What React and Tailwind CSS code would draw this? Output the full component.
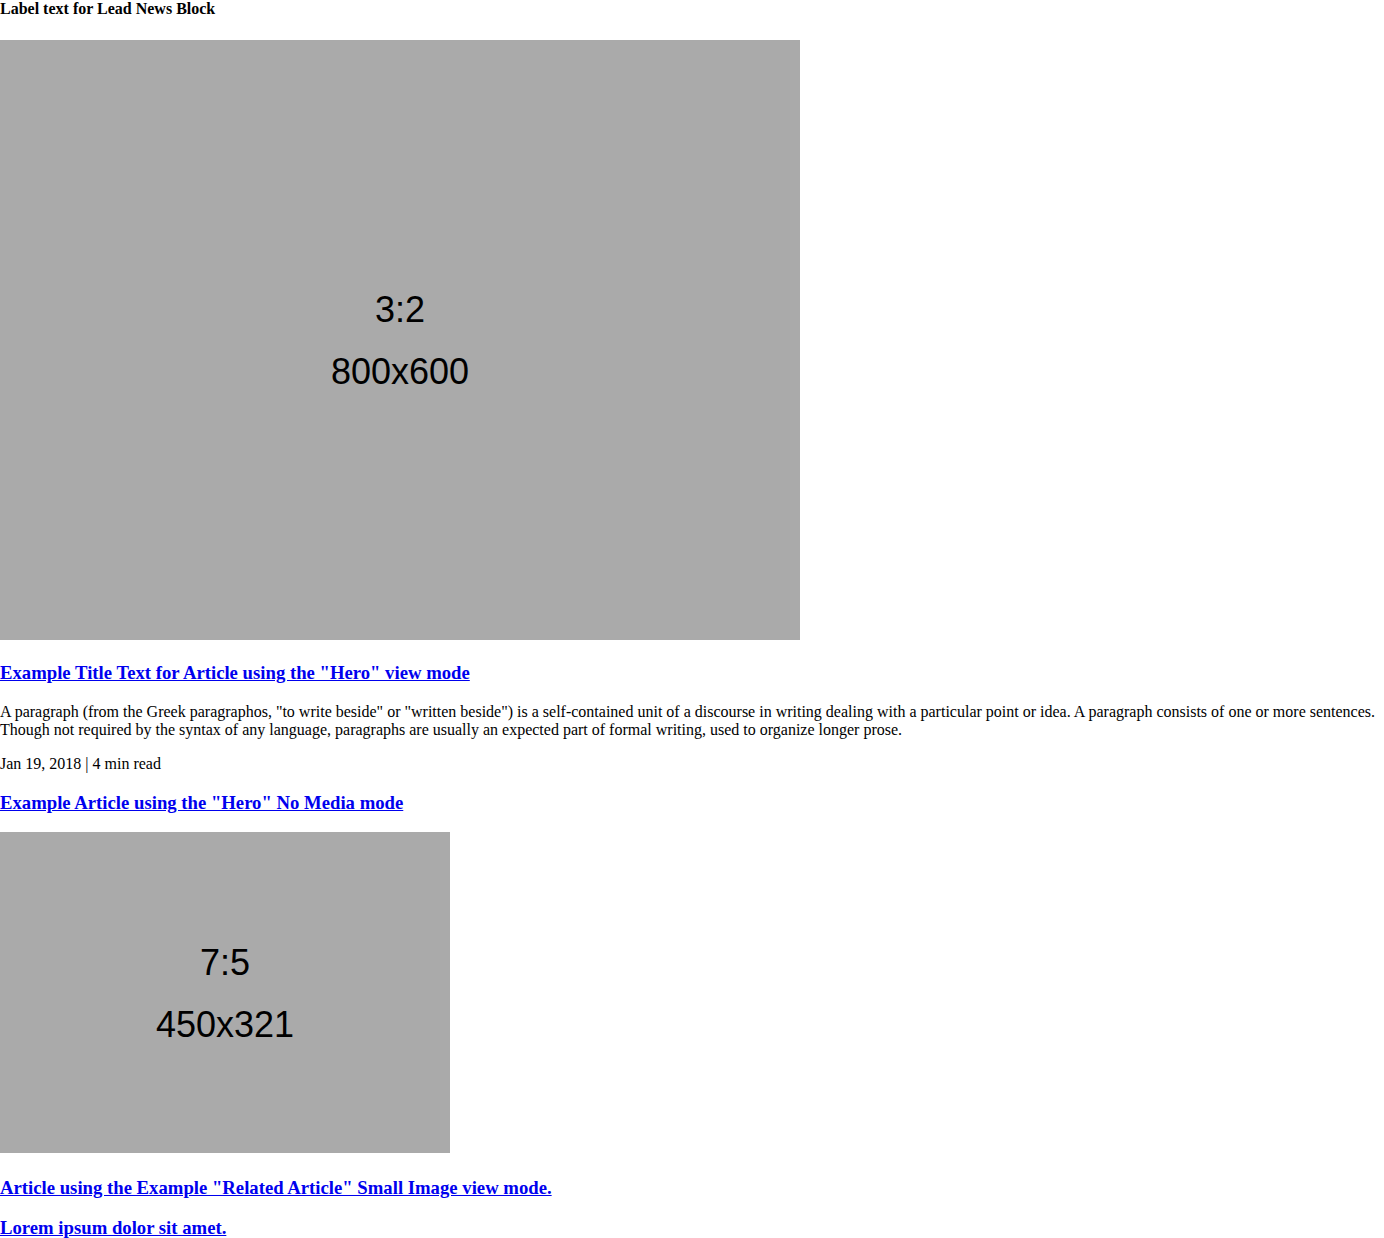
const Placeholder = ({ ratio, size, w, h }) => (
  <div
    className="flex flex-col items-center justify-center bg-[#aaaaaa] text-black font-['Liberation_Sans',Arial,sans-serif] text-[36px] leading-[62px]"
    style={{ width: w, height: h }}
  >
    <span className="translate-y-[1px]">{ratio}</span>
    <span className="translate-y-[1px]">{size}</span>
  </div>
);

const TitleLink = ({ children, className = '' }) => (
  <h3 className={`text-[18.72px] font-bold leading-[21.5px] ${className}`}>
    <a href="#" className="text-[#0000ee] underline">
      {children}
    </a>
  </h3>
);

export default function App() {
  return (
    <div className="bg-white text-black font-['Liberation_Serif','Times_New_Roman',serif] text-[16px] leading-[18.4px] min-h-screen">
      <div className="font-bold">Label text for Lead News Block</div>

      <div className="mt-[21.6px]">
        <Placeholder ratio="3:2" size="800x600" w={800} h={600} />
      </div>

      <TitleLink className="mt-[21.7px]">
        Example Title Text for Article using the "Hero" view mode
      </TitleLink>

      <p className="mt-[19.7px]">
        A paragraph (from the Greek paragraphos, "to write beside" or "written beside") is a self-contained unit of a discourse in writing dealing with a particular point or idea. A paragraph consists of one or more sentences. Though not required by the syntax of any language, paragraphs are usually an expected part of formal writing, used to organize longer prose.
      </p>

      <p className="mt-[15px]">Jan 19, 2018 | 4 min read</p>

      <TitleLink className="mt-[18.7px]">
        Example Article using the "Hero" No Media mode
      </TitleLink>

      <div className="mt-[19px]">
        <Placeholder ratio="7:5" size="450x321" w={450} h={321} />
      </div>

      <TitleLink className="mt-[23.7px]">
        Article using the Example "Related Article" Small Image view mode.
      </TitleLink>

      <TitleLink className="mt-[18.7px]">Lorem ipsum dolor sit amet.</TitleLink>
    </div>
  );
}
